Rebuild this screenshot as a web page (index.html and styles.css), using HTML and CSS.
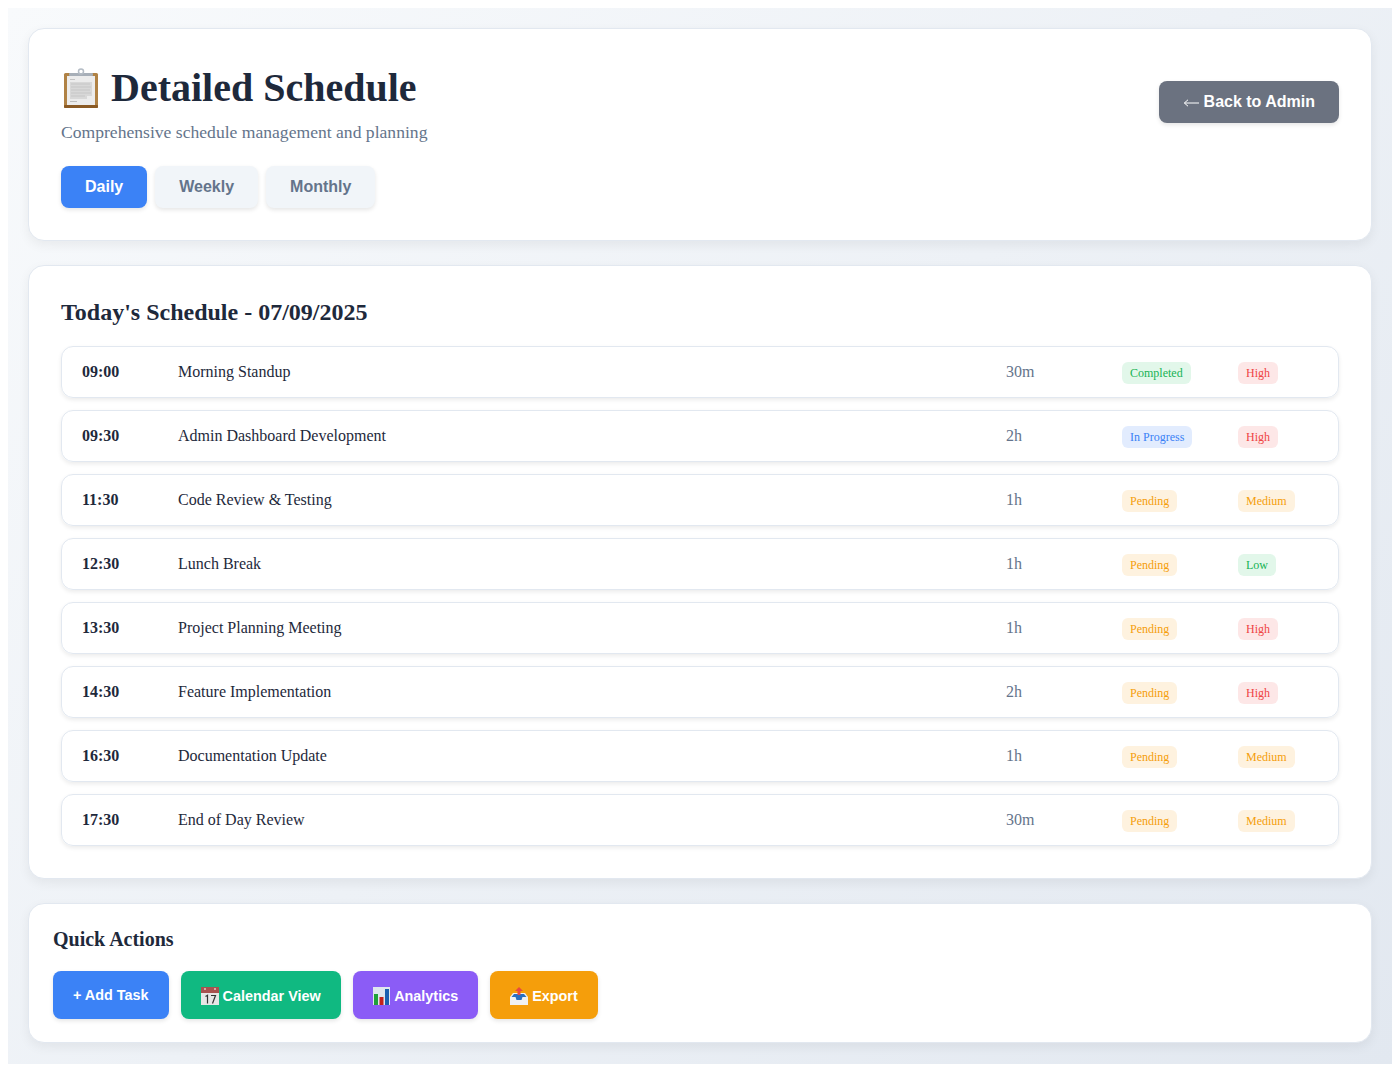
FILE: index.html
```html
<!DOCTYPE html>
<html lang="en">
<head>
    <meta charset="UTF-8">
    <meta name="viewport" content="width=device-width, initial-scale=1.0">
    <title>Detailed Schedule</title>
    <link rel="stylesheet" href="styles.css">
</head>
<body>
    <div class="page">
        <header class="card header">
            <div class="header-top">
                <div>
                    <h1>
                        <svg class="emoji-title" viewBox="0 0 40 40">
                            <rect x="3" y="5" width="34" height="35" rx="1.5" fill="#b08245"/>
                            <rect x="3" y="37" width="34" height="3" rx="1" fill="#8a5a25"/>
                            <rect x="6" y="8" width="28" height="29" fill="#ececec"/>
                            <path d="M9 14h22v14h-5v3H9z" fill="#d8d8d8"/>
                            <path d="M10 16h19M10 19h20M10 22h19M10 25h20M10 28h14" stroke="#c6c6c6" stroke-width="1"/>
                            <rect x="9" y="11" width="5" height="1" fill="#c4c4c4"/>
                            <rect x="9" y="33" width="7" height="1" fill="#bdbdbd"/>
                            <rect x="8" y="5" width="24" height="3" rx="1" fill="#a7afb8"/>
                            <circle cx="20" cy="3.500" r="2.500" fill="none" stroke="#b4bcc5" stroke-width="1.500"/>
                        </svg>
                        Detailed Schedule
                    </h1>
                    <p class="subtitle">Comprehensive schedule management and planning</p>
                </div>
                <a class="back-btn" href="#">
                    <svg class="arrow" viewBox="0 0 16 10"><path d="M16 5H1.500M5 1.800L1.300 5 5 8.200" fill="none" stroke="#fff" stroke-width="1"/></svg>
                    Back to Admin
                </a>
            </div>
            <div class="tabs">
                <button class="tab active">Daily</button>
                <button class="tab">Weekly</button>
                <button class="tab">Monthly</button>
            </div>
        </header>

        <section class="card schedule">
            <h2>Today's Schedule - 07/09/2025</h2>
            <div class="rows">
                <div class="row"><span class="time">09:00</span><span class="task">Morning Standup</span><span class="duration">30m</span><span><span class="badge green">Completed</span></span><span><span class="badge red">High</span></span></div>
                <div class="row"><span class="time">09:30</span><span class="task">Admin Dashboard Development</span><span class="duration">2h</span><span><span class="badge blue">In Progress</span></span><span><span class="badge red">High</span></span></div>
                <div class="row"><span class="time">11:30</span><span class="task">Code Review &amp; Testing</span><span class="duration">1h</span><span><span class="badge orange">Pending</span></span><span><span class="badge orange">Medium</span></span></div>
                <div class="row"><span class="time">12:30</span><span class="task">Lunch Break</span><span class="duration">1h</span><span><span class="badge orange">Pending</span></span><span><span class="badge green">Low</span></span></div>
                <div class="row"><span class="time">13:30</span><span class="task">Project Planning Meeting</span><span class="duration">1h</span><span><span class="badge orange">Pending</span></span><span><span class="badge red">High</span></span></div>
                <div class="row"><span class="time">14:30</span><span class="task">Feature Implementation</span><span class="duration">2h</span><span><span class="badge orange">Pending</span></span><span><span class="badge red">High</span></span></div>
                <div class="row"><span class="time">16:30</span><span class="task">Documentation Update</span><span class="duration">1h</span><span><span class="badge orange">Pending</span></span><span><span class="badge orange">Medium</span></span></div>
                <div class="row"><span class="time">17:30</span><span class="task">End of Day Review</span><span class="duration">30m</span><span><span class="badge orange">Pending</span></span><span><span class="badge orange">Medium</span></span></div>
            </div>
        </section>

        <section class="card actions">
            <h3>Quick Actions</h3>
            <div class="action-list">
                <button class="action bg-blue">+ Add Task</button>
                <button class="action with-icon bg-green">
                    <svg class="emoji" viewBox="0 0 18 18">
                        <rect x="0" y="0" width="18" height="18" fill="#e6e6e6"/>
                        <rect x="0" y="0" width="18" height="6" fill="#a8514f"/>
                        <rect x="3" y="1" width="2" height="2" fill="#d9a5a3"/>
                        <rect x="13" y="1" width="2" height="2" fill="#d9a5a3"/>
                        <path d="M4.500 9.500l2-1.200v8.200M10 8.500h4.500l-3 8" fill="none" stroke="#333" stroke-width="1.200"/>
                    </svg>
                    Calendar View
                </button>
                <button class="action with-icon bg-purple">
                    <svg class="emoji" viewBox="0 0 18 18">
                        <rect x="0" y="0" width="17" height="18" fill="#dfe6ee"/>
                        <rect x="1" y="7" width="4" height="11" fill="#1fa03a"/>
                        <rect x="6.500" y="10" width="4" height="8" fill="#c4211b"/>
                        <rect x="12" y="2" width="4" height="16" fill="#1a5fb0"/>
                    </svg>
                    Analytics
                </button>
                <button class="action with-icon bg-orange">
                    <svg class="emoji" viewBox="0 0 18 18">
                        <path d="M0 10l3-4h12l3 4v8H0z" fill="#f1f1f1"/>
                        <path d="M1.500 10l2.500-3h10l2.500 3h-4l-1 3h-5l-1-3z" fill="#2a6fc0"/>
                        <path d="M9 0l4 4h-2.500v4h-3V4H5z" fill="#e8493f"/>
                    </svg>
                    Export
                </button>
            </div>
        </section>
    </div>
</body>
</html>
```

FILE: styles.css
```css
* {
    box-sizing: border-box;
}
body {
    margin: 8px;
    font-family: "Liberation Serif", serif;
    color: #1e293b;
    background-color: #fff;
}
.page {
    display: flex;
    flex-direction: column;
    gap: 24px;
    height: 1056px;
    padding: 20px;
    background: linear-gradient(135deg, #f8fafc 0%, #e2e8f0 100%);
}
.card {
    background: #fff;
    border: 1px solid #e2e8f0;
    border-radius: 16px;
    box-shadow: 0 4px 12px rgba(0,0,0,0.06);
}
.header {
    height: 213px;
    padding: 32px;
}
.header-top {
    display: flex;
    justify-content: space-between;
    align-items: center;
    margin-bottom: 24px;
}
h1 {
    margin: 0 0 7px;
    font-size: 40px;
    line-height: 54px;
    font-weight: bold;
}
.emoji-title {
    width: 40px;
    height: 40px;
    vertical-align: -7px;
}
.subtitle {
    margin: 0;
    font-size: 17.6px;
    line-height: 20px;
    color: #64748b;
}
.tabs {
    display: flex;
    gap: 8px;
}
button, .back-btn {
    border: none;
    font-family: "Liberation Sans", sans-serif;
    font-weight: bold;
    cursor: pointer;
}
.tab {
    padding: 12px 24px;
    font-size: 16px;
    background: #f1f5f9;
    color: #64748b;
    border-radius: 8px;
    box-shadow: 0 2px 4px rgba(0,0,0,0.1);
}
.tab.active {
    background: #3b82f6;
    color: #fff;
}
.back-btn {
    padding: 12px 24px;
    font-size: 16px;
    line-height: 18px;
    color: #fff;
    background: #6b7280;
    border-radius: 8px;
    text-decoration: none;
    box-shadow: 0 2px 4px rgba(0,0,0,0.1);
}
.arrow {
    width: 16px;
    height: 10px;
    vertical-align: -1px;
}
.schedule {
    height: 614px;
    padding: 32px;
}
h2 {
    margin: 0 0 20px;
    font-size: 24px;
    line-height: 28px;
}
.rows {
    display: flex;
    flex-direction: column;
    gap: 12px;
}
.row {
    display: grid;
    grid-template-columns: 80px 1fr 100px 100px 80px;
    gap: 16px;
    align-items: center;
    height: 52px;
    padding: 0 20px;
    border: 1px solid #e2e8f0;
    border-radius: 12px;
    box-shadow: 0 2px 4px rgba(0,0,0,0.08);
}
.time {
    font-weight: bold;
    font-size: 16px;
}
.task {
    font-size: 16px;
}
.duration {
    font-size: 16px;
    color: #64748b;
}
.badge {
    display: block;
    width: fit-content;
    margin-top: 2px;
    padding: 4px 8px;
    font-size: 12px;
    line-height: 14px;
    border-radius: 6px;
}
.green {
    background: rgba(34,197,94,0.13);
    color: #16b354;
}
.red {
    background: rgba(239,68,68,0.13);
    color: #ef4444;
}
.blue {
    background: rgba(59,130,246,0.15);
    color: #3b82f6;
}
.orange {
    background: rgba(245,158,11,0.13);
    color: #f59e0b;
}
.actions {
    height: 140px;
    padding: 24px;
}
h3 {
    margin: 0 0 20px;
    font-size: 20px;
    line-height: 23px;
}
.action-list {
    display: flex;
    gap: 12px;
}
.action {
    height: 48px;
    padding: 0 20px;
    font-size: 14.4px;
    color: #fff;
    border-radius: 8px;
    box-shadow: 0 2px 4px rgba(0,0,0,0.1);
}
.with-icon {
    padding-top: 2px;
}
.emoji {
    width: 18px;
    height: 18px;
    vertical-align: -4px;
}
.bg-blue { background: #3b82f6; }
.bg-green { background: #10b981; }
.bg-purple { background: #8b5cf6; }
.bg-orange { background: #f59e0b; }
```
